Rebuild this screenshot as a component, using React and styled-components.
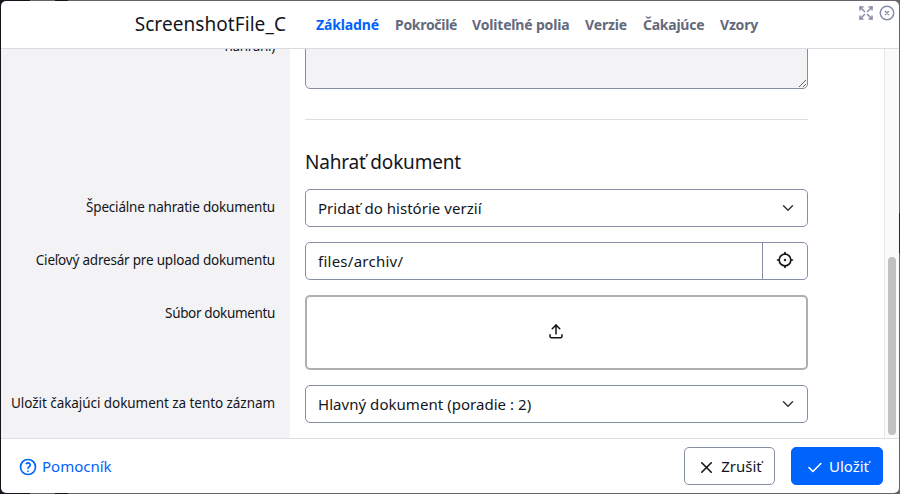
import React from 'react';
import styled, { createGlobalStyle } from 'styled-components';
import {
  TbArrowsMaximize, TbCircleX, TbFocus2, TbUpload, TbHelp, TbX, TbCheck,
} from 'react-icons/tb';

const GlobalStyle = createGlobalStyle`
  *, *::before, *::after { box-sizing: border-box; }
  body {
    margin: 0;
    font-family: "Noto Sans", "Open Sans", sans-serif;
    color: #13151b;
    overflow: hidden;
  }
  button, textarea { font: inherit; color: inherit; margin: 0; }
`;

const Backdrop = styled.div`
  height: 494px;
  padding: 1px;
  background:
    linear-gradient(#032d63, #032d63) 899px 213px / 1px 40px no-repeat,
    linear-gradient(90deg, #13141c 0 30px, #66666a 30px 55px, #13141c 55px 68px, #66666a 68px);
`;

const Dialog = styled.div`
  height: 492px;
  display: flex;
  flex-direction: column;
  border-radius: 5px;
  overflow: hidden;
  background: #fff;
`;

const Header = styled.header`
  height: 48px;
  flex: none;
  display: flex;
  border-bottom: 1px solid #d9dde3;
`;

const Title = styled.h1`
  width: 285px;
  margin: 0;
  text-align: right;
  font-size: 19px;
  font-weight: 400;
  line-height: 47px;
  letter-spacing: 0.07px;
  white-space: nowrap;
`;

const Tabs = styled.nav`
  flex: 1;
  display: flex;
  gap: 16px;
  padding-left: 30px;
`;

const Tab = styled.a`
  width: ${(p) => p.$width}px;
  font-size: 14px;
  font-weight: 700;
  line-height: 47px;
  letter-spacing: ${(p) => p.$track}px;
  white-space: nowrap;
  color: ${(p) => (p.$active ? '#0063fb' : '#646a7b')};
`;

const WindowTools = styled.div`
  display: flex;
  gap: 3px;
  padding: 3px 3px 0 0;
  color: #868ea5;
`;

const Body = styled.main`
  flex: 1;
  min-height: 0;
  display: flex;
`;

const Form = styled.div`
  flex: 1;
  min-width: 0;
  overflow: hidden;
  background: linear-gradient(90deg, #f3f3f5 289px, #fff 289px);
`;

const Row = styled.div`
  display: grid;
  grid-template-columns: 289px 503px;
  column-gap: 15px;
  margin-bottom: ${(p) => p.$after ?? 15}px;
`;

const Label = styled.label`
  padding: 8px 15px 0 0;
  text-align: right;
  font-size: 13.5px;
  line-height: 20px;
  letter-spacing: ${(p) => p.$track ?? 0}px;
  white-space: nowrap;
`;

const ClippedLabel = styled(Label)`
  padding-top: 0;
  margin-top: -13px;
`;

const NoteArea = styled.textarea`
  height: 60px;
  margin-top: -20px;
  display: block;
  background: #f3f3f5;
  border: 1px solid #868ea5;
  border-radius: 5px;
  resize: vertical;
  outline: none;
`;

const SectionHead = styled.div`
  margin-left: 304px;
  width: 503px;
  height: 70px;
  border-top: 1px solid #dcdddf;
`;

const SectionTitle = styled.h2`
  margin: 0;
  padding-top: 28px;
  font-size: 19px;
  font-weight: 400;
  line-height: 28px;
  letter-spacing: -0.2px;
`;

const Field = styled.div`
  height: 38px;
  display: flex;
  align-items: center;
  justify-content: space-between;
  padding-left: 12px;
  border: 1px solid #868ea5;
  border-radius: 5px;
  background: #fff;
  font-size: 15px;
  letter-spacing: ${(p) => p.$track ?? 0.04}px;
`;

const Chevron = styled.svg`
  width: 12px;
  height: 12px;
  margin-right: 13px;
`;

const PickButton = styled.button`
  width: 45px;
  height: 36px;
  display: grid;
  place-items: center;
  padding: 0 1px 2px 0;
  border: 0;
  border-left: 1px solid #868ea5;
  background: none;
`;

const DropZone = styled.div`
  height: 75px;
  display: grid;
  place-items: center;
  padding: 0 1px 3px 0;
  border: 2px solid #afafaf;
  border-radius: 5px;
`;

const ScrollTrack = styled.div`
  width: 15px;
  flex: none;
  display: flex;
  justify-content: center;
  align-items: flex-end;
  padding-bottom: 3px;
  border-left: 1px solid #e8e8e8;
  background: #fafafa;
`;

const ScrollThumb = styled.div`
  width: 8px;
  height: 178px;
  border-radius: 4px;
  background: #c1c1c1;
`;

const Footer = styled.footer`
  height: 55px;
  flex: none;
  display: flex;
  align-items: flex-start;
  gap: 16px;
  padding: 8px 16px 0 17px;
  border-top: 1px solid #dbdfe5;
`;

const HelpLink = styled.a`
  display: flex;
  align-items: center;
  gap: 4px;
  height: 38px;
  margin-right: auto;
  color: #0063fb;
  font-size: 15px;

  svg { position: relative; top: 1px; }
`;

const Button = styled.button`
  width: ${(p) => p.$width}px;
  height: 38px;
  display: flex;
  align-items: center;
  justify-content: center;
  gap: 5px;
  padding: 0;
  font-size: 15px;
  letter-spacing: 0;
  border: 1px solid ${(p) => (p.$primary ? '#0063fb' : '#868ea5')};
  border-radius: 5px;
  background: ${(p) => (p.$primary ? '#0063fb' : '#fff')};
  color: ${(p) => (p.$primary ? '#fff' : '#13151b')};

  svg { position: relative; top: 1px; }
`;

const tabs = [
  ['Základné', 63, -0.15],
  ['Pokročilé', 61, -0.3],
  ['Voliteľné polia', 97, -0.17],
  ['Verzie', 42, -0.15],
  ['Čakajúce', 61, -0.25],
  ['Vzory', 40, -0.2],
];

function Select({ children, track }) {
  return (
    <Field $track={track}>
      {children}
      <Chevron viewBox="0 0 16 16" fill="none" stroke="#343a40" strokeWidth="2" strokeLinecap="round" strokeLinejoin="round">
        <path d="m2 5 6 6 6-6" />
      </Chevron>
    </Field>
  );
}

export default function App() {
  return (
    <>
      <GlobalStyle />
      <Backdrop>
        <Dialog>
          <Header>
            <Title>ScreenshotFile_C</Title>
            <Tabs>
              {tabs.map(([name, width, track], i) => (
                <Tab key={name} $width={width} $track={track} $active={i === 0}>{name}</Tab>
              ))}
            </Tabs>
            <WindowTools>
              <TbArrowsMaximize size={18} strokeWidth={2} />
              <TbCircleX size={18} strokeWidth={2} />
            </WindowTools>
          </Header>
          <Body>
            <Form>
              <Row $after={30}>
                <ClippedLabel $track={-0.3}>nahraní)</ClippedLabel>
                <NoteArea readOnly />
              </Row>
              <SectionHead>
                <SectionTitle>Nahrať dokument</SectionTitle>
              </SectionHead>
              <Row>
                <Label $track={-0.19}>Špeciálne nahratie dokumentu</Label>
                <Select>Pridať do histórie verzií</Select>
              </Row>
              <Row>
                <Label $track={-0.2}>Cieľový adresár pre upload dokumentu</Label>
                <Field $track={0.25}>
                  files/archiv/
                  <PickButton><TbFocus2 size={20} /></PickButton>
                </Field>
              </Row>
              <Row>
                <Label $track={-0.35}>Súbor dokumentu</Label>
                <DropZone><TbUpload size={18} /></DropZone>
              </Row>
              <Row>
                <Label $track={-0.06}>Uložit čakajúci dokument za tento záznam</Label>
                <Select>Hlavný dokument (poradie : 2)</Select>
              </Row>
            </Form>
            <ScrollTrack><ScrollThumb /></ScrollTrack>
          </Body>
          <Footer>
            <HelpLink><TbHelp size={20} />Pomocník</HelpLink>
            <Button $width={91}><TbX size={19} />Zrušiť</Button>
            <Button $width={92} $primary><TbCheck size={19} />Uložiť</Button>
          </Footer>
        </Dialog>
      </Backdrop>
    </>
  );
}
